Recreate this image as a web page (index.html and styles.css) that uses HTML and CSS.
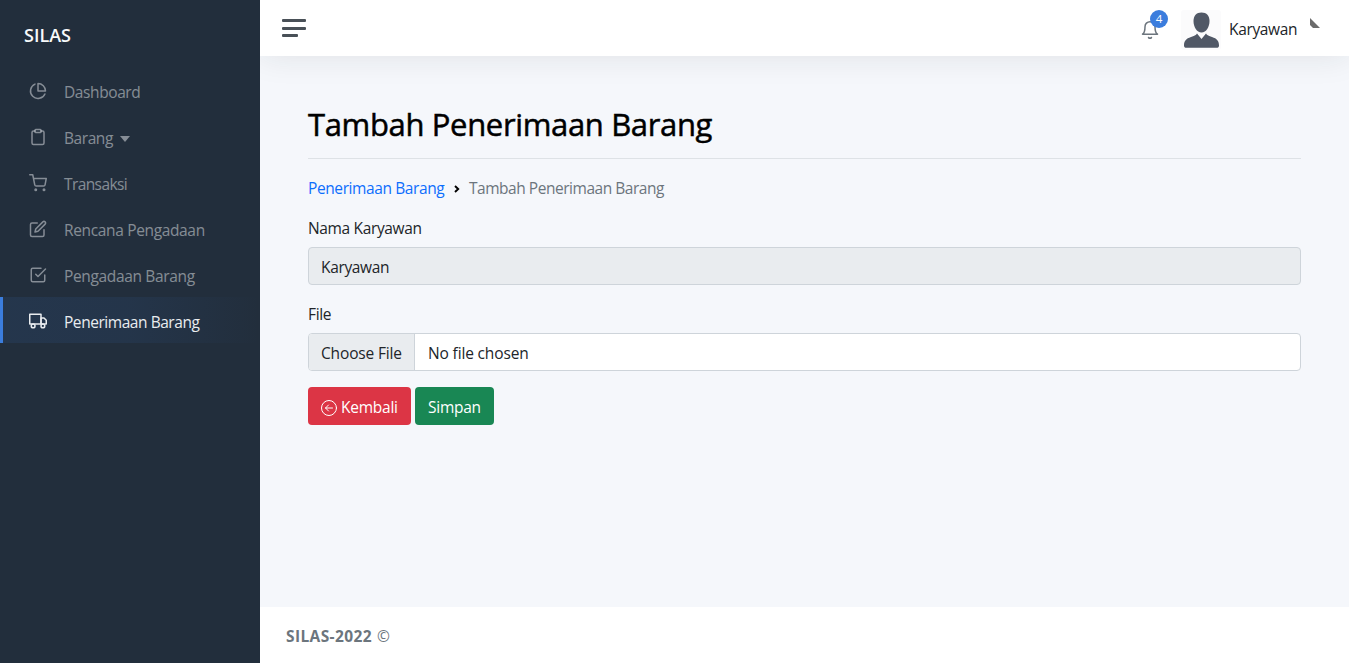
FILE: index.html
```html
<!DOCTYPE html>
<html lang="id">
<head>
<meta charset="utf-8">
<title>Tambah Penerimaan Barang</title>
<link rel="stylesheet" href="styles.css">
</head>
<body>
<div class="wrapper">
  <nav class="sidebar">
    <a class="brand">SILAS</a>
    <ul class="menu">
      <li class="item"><svg class="icon" viewBox="0 0 24 24"><path d="M21.21 15.89A10 10 0 1 1 8 2.83"/><path d="M22 12A10 10 0 0 0 12 2v10z"/></svg><span class="t-dashboard">Dashboard</span></li>
      <li class="item"><svg class="icon" viewBox="0 0 24 24"><path d="M16 4h2a2 2 0 0 1 2 2v14a2 2 0 0 1-2 2H6a2 2 0 0 1-2-2V6a2 2 0 0 1 2-2h2"/><rect x="8" y="2" width="8" height="4" rx="1"/></svg><span class="t-barang">Barang</span><i class="caret"></i></li>
      <li class="item"><svg class="icon" viewBox="0 0 24 24"><circle cx="9" cy="21" r="1"/><circle cx="20" cy="21" r="1"/><path d="M1 1h4l2.68 13.39a2 2 0 0 0 2 1.61h9.72a2 2 0 0 0 2-1.61L23 6H6"/></svg><span class="t-transaksi">Transaksi</span></li>
      <li class="item"><svg class="icon" viewBox="0 0 24 24"><path d="M11 4H4a2 2 0 0 0-2 2v14a2 2 0 0 0 2 2h14a2 2 0 0 0 2-2v-7"/><path d="M18.5 2.5a2.121 2.121 0 0 1 3 3L12 15l-4 1 1-4 9.5-9.5z"/></svg><span class="t-rencana">Rencana Pengadaan</span></li>
      <li class="item"><svg class="icon" viewBox="0 0 24 24"><path d="M9 11l3 3L22 4"/><path d="M21 12v7a2 2 0 0 1-2 2H5a2 2 0 0 1-2-2V5a2 2 0 0 1 2-2h11"/></svg><span class="t-pengadaan">Pengadaan Barang</span></li>
      <li class="item active"><svg class="icon" viewBox="0 0 24 24"><path d="M1 3h15v13H1z"/><path d="M16 8h4l3 3v5h-7z"/><circle cx="5.5" cy="18.5" r="2.5"/><circle cx="18.5" cy="18.5" r="2.5"/></svg><span class="t-penerimaan">Penerimaan Barang</span></li>
    </ul>
  </nav>
  <div class="main">
    <header class="navbar">
      <div class="hamburger"><i></i><i></i><i class="short"></i></div>
      <div class="tools">
        <div class="alerts"><svg class="bell" viewBox="0 0 24 24"><path d="M18 8A6 6 0 0 0 6 8c0 7-3 9-3 9h18s-3-2-3-9"/><path d="M13.73 21a2 2 0 0 1-3.46 0"/></svg><span class="badge">4</span></div>
        <svg class="avatar" viewBox="0 0 40 40"><rect width="40" height="40" rx="3" fill="#fbfbfc"/><path d="M20.500 2.500c5.200 0 8 3.300 8 8.500 0 6-3.300 11.500-8 11.500S12.500 17 12.500 11c0-5.200 2.800-8.500 8-8.500z" fill="#505866"/><path d="M16 23.500l4.500 5.500 4.500-5.500c1 1.800 3 2.600 6 3.600 5 1.600 7 4 7 8.400 0 1.700-.8 2.300-2.500 2.300h-30C3.800 37.800 3 37.200 3 35.500c0-4.400 2-6.800 7-8.400 3-1 5-1.800 6-3.600z" fill="#505866"/></svg>
        <span class="user">Karyawan</span>
        <svg class="corner" viewBox="0 0 10 10"><path d="M0 0l10 10H3L0 7z"/></svg>
      </div>
    </header>
    <main class="content">
      <h1 class="title"><span>Tambah Penerimaan Barang</span></h1>
      <div class="crumbs">
        <a class="link">Penerimaan Barang</a>
        <svg class="chevron" viewBox="0 0 6 8"><path d="M1 1l3.200 3L1 7"/></svg>
        <span class="current">Tambah Penerimaan Barang</span>
      </div>
      <label class="label l-name">Nama Karyawan</label>
      <div class="control disabled"><span class="value">Karyawan</span></div>
      <label class="label">File</label>
      <div class="control"><span class="choose">Choose File</span><span class="value nofile">No file chosen</span></div>
      <div class="actions">
        <a class="btn danger"><svg class="back" viewBox="0 0 16 16"><circle cx="8" cy="8" r="7.500"/><path d="M11.500 8h-7M7.500 5l-3 3 3 3"/></svg><span class="t-kembali">Kembali</span></a>
        <a class="btn success"><span class="t-simpan">Simpan</span></a>
      </div>
    </main>
    <footer class="footer"><strong>SILAS-2022</strong><span class="copy">©</span></footer>
  </div>
</div>
</body>
</html>
```
FILE: styles.css
```css
* { box-sizing: border-box; }
body { margin: 0; font: 15.5px/26px "Open Sans", "Noto Sans", sans-serif; letter-spacing: -.35px; color: #212529; background: #f5f7fb; }
span, strong, label { white-space: nowrap; }
.wrapper { display: flex; height: 663px; overflow: hidden; }
.sidebar { width: 260px; flex: none; background: #222e3c; position: relative; z-index: 2; }
.brand { display: block; padding: 21px 24px 18px; height: 67px; font-size: 18px; line-height: 28px; font-weight: 600; color: #f8f9fa; letter-spacing: 0; }
.menu { list-style: none; margin: 0; padding: 0; }
.item { display: flex; align-items: center; height: 46px; padding: 2px 0 0 26px; border-left: 3px solid transparent; color: rgba(233, 236, 239, .5); }
.item.active { color: #e9ecef; border-left-color: #3b7ddd; background: linear-gradient(90deg, rgba(59, 125, 221, .1), rgba(59, 125, 221, .0875) 50%, transparent); }
.item span, .btn span, .link, .current { padding-top: 2px; }
.t-dashboard { letter-spacing: -.4px; }
.t-barang { letter-spacing: -.43px; }
.t-transaksi { letter-spacing: -.6px; }
.t-pengadaan { letter-spacing: -.35px; }
.t-penerimaan { letter-spacing: -.45px; }
.icon { width: 18px; height: 18px; margin-right: 17px; fill: none; stroke: currentColor; stroke-width: 2; stroke-linecap: round; stroke-linejoin: round; overflow: visible; }
.caret { margin: 3px 0 0 7px; border: 5px solid transparent; border-top: 6px solid currentColor; border-bottom: 0; }
.main { flex: 1; display: flex; flex-direction: column; min-width: 0; }
.navbar { height: 56px; flex: none; display: flex; justify-content: space-between; background: #fff; box-shadow: 0 0 32px rgba(33, 37, 41, .1); padding: 0 29px 0 22px; }
.hamburger { display: flex; flex-direction: column; gap: 5px; padding-top: 19px; }
.hamburger i { display: block; width: 24px; height: 3px; border-radius: 1px; background: #495057; }
.hamburger .short { width: 16px; margin-top: -1px; }
.tools { display: flex; align-items: flex-start; }
.alerts { position: relative; margin: 20px 21px 0 0; height: 20px; }
.bell { display: block; width: 20px; height: 20px; fill: none; stroke: #6c757d; stroke-width: 1.8; stroke-linecap: round; stroke-linejoin: round; }
.badge { position: absolute; left: 10px; top: -10px; width: 18px; height: 18px; border-radius: 50%; background: #3b7ddd; color: #fff; font-size: 11.5px; line-height: 18px; text-align: center; letter-spacing: 0; }
.avatar { width: 40px; height: 40px; margin: 10px 8px 0 0; }
.user { margin-top: 16px; width: 68px; }
.corner { width: 10px; height: 10px; margin: 18px 0 0 13px; fill: #6c6c6c; }
.content { flex: 1; padding: 48px; }
.title { margin: 0 0 16px; height: 55px; border-bottom: 1px solid #dee2e6; font-size: 31px; line-height: 40px; font-weight: 400; -webkit-text-stroke: .5px #000; letter-spacing: -.35px; color: #000; white-space: nowrap; }
.crumbs { display: flex; align-items: center; height: 24px; margin-bottom: 16px; }
.link { color: #0d6efd; width: 137px; white-space: nowrap; letter-spacing: -.4px; }
.chevron { width: 6px; height: 8px; margin: 3px 9px 0; fill: none; stroke: #000; stroke-width: 1.9; }
.current { color: #6c757d; letter-spacing: -.47px; }
.label { display: block; margin-bottom: 8px; height: 24px; }
.control { display: flex; align-items: stretch; height: 38px; margin-bottom: 16px; border: 1px solid #ced4da; border-radius: 4px; background: #fff; line-height: 38px; overflow: hidden; }
.control.disabled { background: #e9ecef; }
.value { padding-left: 12px; }
.nofile { padding-left: 13px; letter-spacing: -.15px; }
.choose { width: 106px; padding-left: 12px; background: #e9ecef; border-right: 1px solid #ced4da; letter-spacing: -.15px; }
.actions { display: flex; gap: 4px; }
.btn { display: flex; align-items: center; height: 38px; padding-left: 13px; border-radius: 4px; color: #fff; letter-spacing: -.25px; }
.danger { width: 103px; background: #dc3545; }
.success { width: 79px; background: #198754; }
.back { width: 16px; height: 16px; margin: 3px 4px 0 0; fill: none; stroke: #fff; stroke-width: 1; stroke-linecap: round; stroke-linejoin: round; }
.footer { height: 56px; flex: none; display: flex; gap: 5px; padding: 16px 26px; background: #fff; color: #6c757d; }
.footer strong { letter-spacing: .38px; }
```
